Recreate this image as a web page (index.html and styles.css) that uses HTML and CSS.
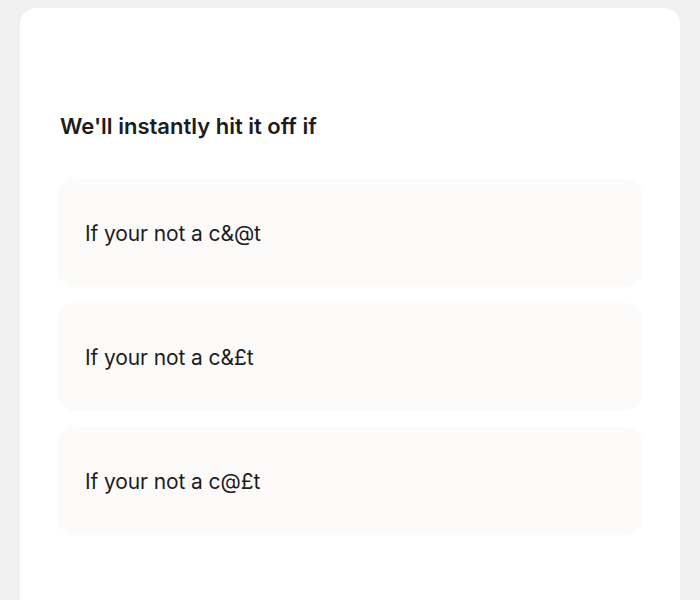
FILE: index.html
```html
<!DOCTYPE html>
<html>
<head>
<meta charset="utf-8">
<link rel="stylesheet" href="styles.css">
</head>
<body>
<div class="card">
  <h2 class="title">We'll instantly hit it off if</h2>
  <div class="list">
    <div class="item">If your not a c&amp;@t</div>
    <div class="item">If your not a c&amp;£t</div>
    <div class="item">If your not a c@£t</div>
  </div>
</div>
</body>
</html>
```
FILE: styles.css
```css
html, body {
  margin: 0;
  padding: 0;
  background: #f0f0f0;
}
body {
  padding: 8px 20px 0;
  font-family: Inter, "Noto Sans", sans-serif;
  color: #1c1c1c;
}
.card {
  background: #ffffff;
  border-radius: 16px;
  padding: 104px 40px 80px;
  min-height: 600px;
  box-sizing: border-box;
}
.title {
  margin: 0 0 41px;
  font-size: 22px;
  line-height: 28px;
  font-weight: 600;
  letter-spacing: 0;
}
.list {
  display: flex;
  flex-direction: column;
  gap: 20px;
  margin: 0 -1px;
}
.item {
  height: 104px;
  display: flex;
  align-items: center;
  padding: 0 26px;
  background: #fcfbf9;
  border-radius: 16px;
  box-shadow: 0 0 4px rgba(0,0,0,0.05);
  font-size: 21px;
  font-weight: 400;
  letter-spacing: -0.1px;
  box-sizing: border-box;
}
```
